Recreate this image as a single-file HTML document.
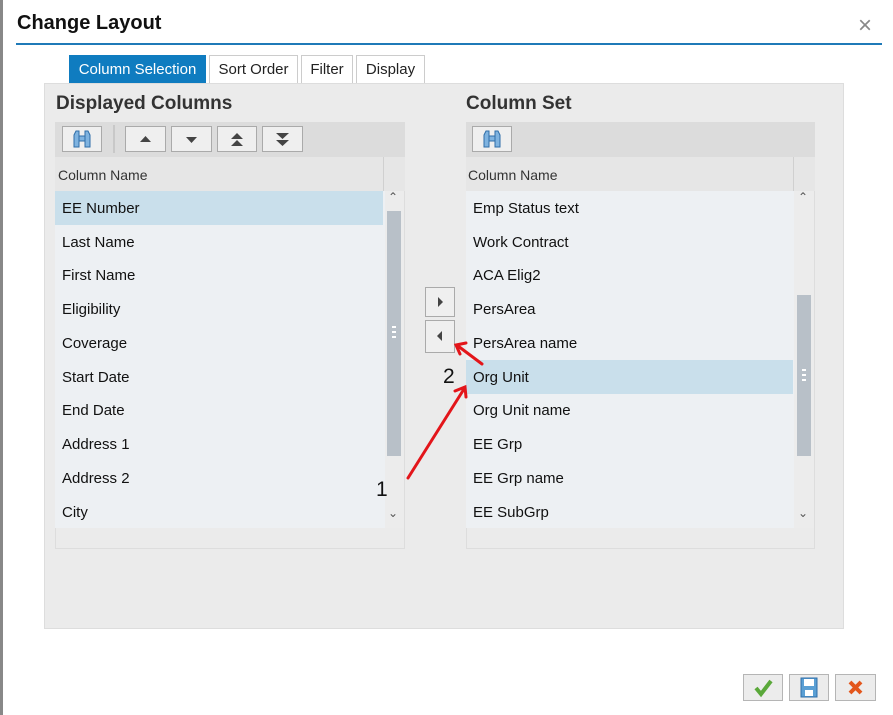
<html><head><style>
body{margin:0;width:893px;height:715px;background:#fff;font-family:"Liberation Sans",Arial,sans-serif;position:relative;overflow:hidden}
.a{position:absolute}
.tab{position:absolute;top:55px;height:28px;border:1px solid #ccc;border-bottom:none;background:#fff;font-size:15px;line-height:28px;text-align:center;color:#222;box-sizing:border-box}
.row{position:absolute;left:0;height:34px;line-height:36px;font-size:15px;color:#111;padding-left:7px;box-sizing:border-box}
.btn{position:absolute;top:126px;height:26px;border:1px solid #aaa;background:#efefef;box-sizing:border-box}
.sb{position:absolute;width:26px;height:26px;border:1px solid #b5b5b5;background:#ececec;box-sizing:border-box;top:674px}
</style></head><body>
<div class="a" style="left:0;top:0;width:3px;height:715px;background:#888"></div>
<div class="a" style="left:17px;top:12px;font-size:20px;font-weight:bold;color:#111">Change Layout</div>
<div class="a" style="left:858px;top:12px;font-size:24px;color:#888">×</div>
<div class="a" style="left:16px;top:43px;width:866px;height:2px;background:#1f7ab8"></div>
<div class="tab" style="left:69px;width:137px;background:#0f7cc0;color:#fff;border-color:#0f7cc0">Column Selection</div>
<div class="tab" style="left:209px;width:89px">Sort Order</div>
<div class="tab" style="left:301px;width:52px">Filter</div>
<div class="tab" style="left:356px;width:69px">Display</div>
<div class="a" style="left:44px;top:83px;width:800px;height:546px;background:#ebebeb;border:1px solid #ddd;box-sizing:border-box"></div>
<div class="a" style="left:56px;top:93px;font-size:19px;font-weight:bold;color:#333">Displayed Columns</div>
<div class="a" style="left:466px;top:93px;font-size:19px;font-weight:bold;color:#333">Column Set</div>

<div class="a" style="left:55px;top:122px;width:350px;height:427px;border:1px solid #ddd;box-sizing:border-box;background:#ebebeb"></div>
<div class="a" style="left:55px;top:122px;width:350px;height:35px;background:#dcdcdc"></div>
<div class="btn" style="left:62px;width:40px"><svg width="38" height="24"><g fill="#7fb3e0" stroke="#2f6ea8"><path d="M11 20V8L13 4H16V20Z"/><path d="M22 20V4H25L27 8V20Z"/><rect x="16" y="9" width="6" height="5"/></g></svg></div>
<div class="a" style="left:113px;top:125px;width:2px;height:28px;background:#c8c8c8"></div>
<div class="btn" style="left:125px;width:41px"><svg width="39" height="24"><path d="M14 15L19.5 9L25 15Z" fill="#444"/></svg></div>
<div class="btn" style="left:171px;width:41px"><svg width="39" height="24"><path d="M14 10L19.5 16L25 10Z" fill="#444"/></svg></div>
<div class="btn" style="left:217px;width:40px"><svg width="38" height="24"><path d="M13 12L19 6L25 12ZM13 19L19 13L25 19Z" fill="#444"/></svg></div>
<div class="btn" style="left:262px;width:41px"><svg width="39" height="24"><path d="M13 6L19.5 12L26 6ZM13 13L19.5 19L26 13Z" fill="#444"/></svg></div>
<div class="a" style="left:55px;top:157px;width:350px;height:34px;background:#e6e6e6;border-bottom:1px solid #ddd"></div>
<div class="a" style="left:58px;top:167px;font-size:14px;color:#333">Column Name</div>
<div class="a" style="left:383px;top:157px;width:1px;height:34px;background:#d0d0d0"></div>
<div class="a" style="left:55px;top:191px;width:330px;height:337px;background:#edf0f3">
<div class="row" style="top:0;width:328px;background:#c9dfeb">EE Number</div>
<div class="row" style="top:34px">Last Name</div>
<div class="row" style="top:67px">First Name</div>
<div class="row" style="top:101px">Eligibility</div>
<div class="row" style="top:135px">Coverage</div>
<div class="row" style="top:169px">Start Date</div>
<div class="row" style="top:202px">End Date</div>
<div class="row" style="top:236px">Address 1</div>
<div class="row" style="top:270px">Address 2</div>
<div class="row" style="top:304px">City</div>
</div>
<div class="a" style="left:385px;top:191px;width:19px;height:337px;background:#ececec"></div>
<div class="a" style="left:387px;top:211px;width:14px;height:245px;background:#b8c0c8"></div>
<div class="a" style="left:388px;top:190px;font-size:12px;color:#555">⌃</div>
<div class="a" style="left:388px;top:506px;font-size:12px;color:#555">⌄</div>
<div class="a" style="left:392px;top:326px;width:4px;height:14px;background:repeating-linear-gradient(#fff 0 2px,transparent 2px 5px)"></div>

<div class="btn" style="left:425px;top:287px;width:30px;height:30px"><svg width="28" height="28"><path d="M12 9L17 14L12 19Z" fill="#444"/></svg></div>
<div class="btn" style="left:425px;top:320px;width:30px;height:33px"><svg width="28" height="30"><path d="M16 10L11 15L16 20Z" fill="#444"/></svg></div>

<div class="a" style="left:466px;top:122px;width:349px;height:427px;border:1px solid #ddd;box-sizing:border-box;background:#ebebeb"></div>
<div class="a" style="left:466px;top:122px;width:349px;height:35px;background:#dcdcdc"></div>
<div class="btn" style="left:472px;width:40px"><svg width="38" height="24"><g fill="#7fb3e0" stroke="#2f6ea8"><path d="M11 20V8L13 4H16V20Z"/><path d="M22 20V4H25L27 8V20Z"/><rect x="16" y="9" width="6" height="5"/></g></svg></div>
<div class="a" style="left:466px;top:157px;width:349px;height:34px;background:#e6e6e6;border-bottom:1px solid #ddd"></div>
<div class="a" style="left:468px;top:167px;font-size:14px;color:#333">Column Name</div>
<div class="a" style="left:793px;top:157px;width:1px;height:34px;background:#d0d0d0"></div>
<div class="a" style="left:466px;top:191px;width:328px;height:337px;background:#edf0f3">
<div class="row" style="top:0">Emp Status text</div>
<div class="row" style="top:34px">Work Contract</div>
<div class="row" style="top:67px">ACA Elig2</div>
<div class="row" style="top:101px">PersArea</div>
<div class="row" style="top:135px">PersArea name</div>
<div class="row" style="top:169px;width:327px;background:#c9dfeb">Org Unit</div>
<div class="row" style="top:202px">Org Unit name</div>
<div class="row" style="top:236px">EE Grp</div>
<div class="row" style="top:270px">EE Grp name</div>
<div class="row" style="top:304px">EE SubGrp</div>
</div>
<div class="a" style="left:794px;top:191px;width:20px;height:337px;background:#ececec"></div>
<div class="a" style="left:797px;top:295px;width:14px;height:161px;background:#b8c0c8"></div>
<div class="a" style="left:798px;top:190px;font-size:12px;color:#555">⌃</div>
<div class="a" style="left:798px;top:506px;font-size:12px;color:#555">⌄</div>
<div class="a" style="left:802px;top:369px;width:4px;height:14px;background:repeating-linear-gradient(#fff 0 2px,transparent 2px 5px)"></div>

<svg class="a" style="left:0;top:0" width="893" height="715"><g stroke="#e3151a" stroke-width="3" fill="none" stroke-linecap="round"><path d="M408 478L464 389M455 391L465 387L466 397M482 364L458 346M460 354L456 345L466 343"/></g></svg>
<div class="a" style="left:376px;top:478px;font-size:21px;color:#111">1</div>
<div class="a" style="left:443px;top:365px;font-size:21px;color:#111">2</div>

<div class="sb" style="left:743px;width:40px;height:27px"><svg width="38" height="25"><path d="M12 13L17 19L27 6" stroke="#5aa83a" stroke-width="4" fill="none"/></svg></div>
<div class="sb" style="left:789px;width:40px;height:27px"><svg width="38" height="25"><path d="M11 3H27V22H11Z" fill="#5a9fd4" stroke="#2f6ea8"/><rect x="14" y="4" width="10" height="7" fill="#fff"/><rect x="15" y="15" width="8" height="6" fill="#fff"/></svg></div>
<div class="sb" style="left:835px;width:41px;height:27px"><svg width="39" height="25"><path d="M14 7L25 18M25 7L14 18" stroke="#e3561c" stroke-width="4"/></svg></div>
</body></html>
